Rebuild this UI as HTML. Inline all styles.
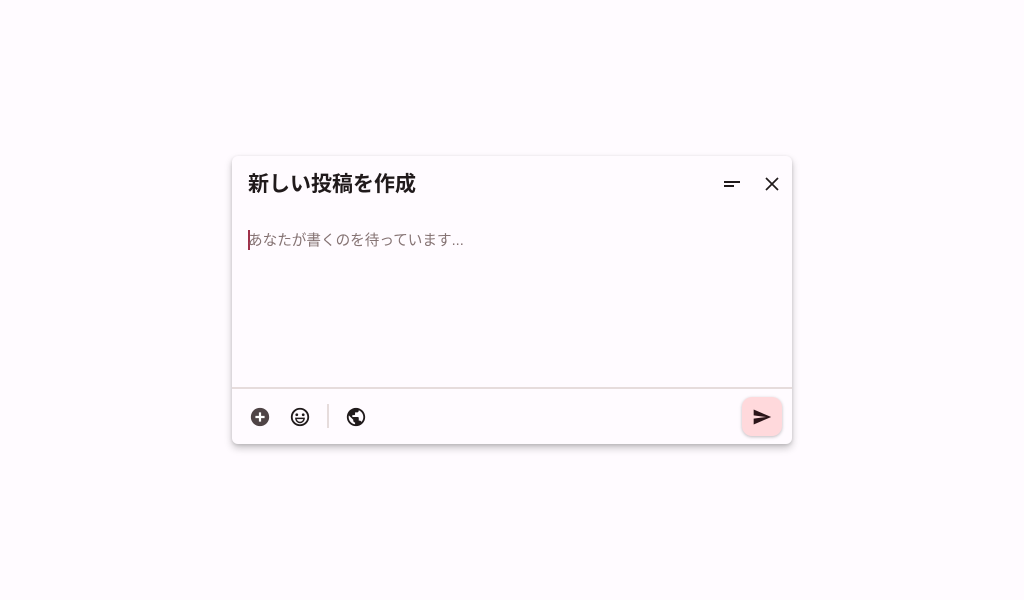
<!DOCTYPE html>
<html><head><meta charset="utf-8"><style>
html,body{margin:0;width:1024px;height:600px;background:#fffbff;overflow:hidden;font-family:"Liberation Sans","Noto Sans CJK JP",sans-serif}
.card{position:absolute;left:232px;top:156px;width:560px;height:288px;background:#fffbff;border-radius:6px;box-shadow:0 4px 8px rgba(0,0,0,.22),0 1px 3px rgba(0,0,0,.12)}
.title{position:absolute;left:16px;top:15px;font-size:21px;font-weight:bold;color:#201a1b;line-height:28px}
.ph{position:absolute;left:16px;top:75px;font-size:14.6px;color:#857373;line-height:20px}
.cursor{position:absolute;left:16px;top:74px;width:2px;height:20px;background:#a0304a}
.sep{position:absolute;left:0;top:231px;width:560px;height:2px;background:#e6dcdc}
.vsep{position:absolute;left:95px;top:248px;width:2px;height:24px;background:#e6dcdc}
.send{position:absolute;left:510px;top:241px;width:40px;height:39px;border-radius:10px;background:#ffd9dc;box-shadow:0 1px 3px rgba(0,0,0,.25)}
svg{position:absolute}
</style></head><body>
<div class="card">
<div class="title">新しい投稿を作成</div>
<svg style="left:492px;top:25px" width="16" height="8"><rect x="0" y="0" width="16" height="2" fill="#201a1b"/><rect x="0" y="4" width="10" height="2" fill="#201a1b"/></svg>
<svg style="left:532px;top:20px" width="16" height="16"><path d="M2 2L14 14M14 2L2 14" stroke="#201a1b" stroke-width="1.7"/></svg>
<div class="cursor"></div>
<div class="ph">あなたが書くのを待っています...</div>
<div class="sep"></div>
<svg style="left:17px;top:250px" width="22" height="22" viewBox="0 0 24 24"><circle cx="12" cy="12" r="10" fill="#4f4446"/><path d="M12 7v10M7 12h10" stroke="#fff" stroke-width="2.4"/></svg>
<svg style="left:57px;top:250px" width="22" height="22" viewBox="0 0 24 24"><circle cx="12" cy="12" r="9" fill="none" stroke="#201a1b" stroke-width="2"/><circle cx="8.5" cy="9.5" r="1.5" fill="#201a1b"/><circle cx="15.5" cy="9.5" r="1.5" fill="#201a1b"/><path d="M7.5 13.5h9a4.5 4.5 0 0 1-9 0z" fill="none" stroke="#201a1b" stroke-width="1.6"/></svg>
<div class="vsep"></div>
<svg style="left:113px;top:250px" width="22" height="22" viewBox="0 0 24 24"><path fill="#201a1b" d="M12 2C6.48 2 2 6.48 2 12s4.48 10 10 10 10-4.48 10-10S17.520 2 12 2zm-1 17.93c-3.95-.49-7-3.85-7-7.930 0-.62.08-1.21.21-1.79L9 15v1c0 1.1.9 2 2 2v1.93zm6.9-2.54c-.26-.81-1-1.39-1.9-1.39h-1v-3c0-.55-.45-1-1-1H8v-2h2c.55 0 1-.45 1-1V7h2c1.1 0 2-.9 2-2v-.41c2.930 1.19 5 4.06 5 7.41 0 2.08-.8 3.97-2.1 5.39z"/></svg>
<div class="send"><svg style="left:9px;top:10px" width="22" height="20" viewBox="0 0 24 24"><path d="M2 21l21-9L2 3v7l15 2-15 2z" fill="#2b1519"/></svg></div>
</div>
</body></html>
